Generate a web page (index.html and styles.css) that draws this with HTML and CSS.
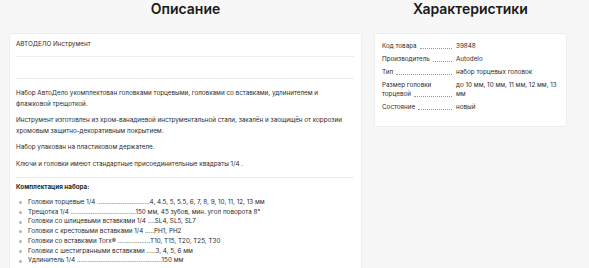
FILE: index.html
```html
<!DOCTYPE html>
<html lang="ru">
<head>
    <meta charset="UTF-8">
    <meta name="viewport" content="width=device-width, initial-scale=1.0">
    <title>Описание и характеристики</title>
    <link rel="stylesheet" href="styles.css">
</head>
<body>
    <div class="product-info">
        <!-- Description column -->
        <section class="column column-desc">
            <h2 class="column-title">Описание</h2>
            <div class="card desc-card">
                <div class="desc-brand">АВТОДЕЛО Инструмент</div>
                <div class="desc-empty"></div>
                <div class="desc-text">
                    <p>Набор АвтоДело укомплектован головками торцевыми, головками со вставками, удлинителем и флажковой трещоткой.</p>
                    <p>Инструмент изготовлен из хром-ванадиевой инструментальной стали, закалён и заощищён от коррозии хромовым защитно-декоративным покрытием.</p>
                    <p>Набор упакован на пластиковом держателе.</p>
                    <p>Ключи и головки имеют стандартные присоединительные квадраты 1/4 .</p>
                </div>
                <div class="kit">
                    <div class="kit-title">Комплектация набора:</div>
                    <ul class="kit-list">
                        <li>Головки торцевые 1/4 .............................4, 4.5, 5, 5.5, 6, 7, 8, 9, 10, 11, 12, 13 мм</li>
                        <li>Трещотка 1/4 ....................................150 мм, 45 зубов, мин. угол поворота 8°</li>
                        <li>Головки со шлицевыми вставками 1/4 ....SL4, SL5, SL7</li>
                        <li>Головки с крестовыми вставками 1/4 .....PH1, PH2</li>
                        <li>Головки со вставками Torx® ..................T10, T15, T20, T25, T30</li>
                        <li>Головки с шестигранными вставками .....3, 4, 5, 6 мм</li>
                        <li>Удлинитель 1/4 ...............................................150 мм</li>
                    </ul>
                </div>
            </div>
        </section>

        <!-- Specs column -->
        <section class="column column-specs">
            <h2 class="column-title">Характеристики</h2>
            <div class="card specs-card">
                <div class="spec-row">
                    <div class="spec-label"><span>Код товара</span><i></i></div>
                    <div class="spec-value">39848</div>
                </div>
                <div class="spec-row">
                    <div class="spec-label"><span>Производитель</span><i></i></div>
                    <div class="spec-value">Autodelo</div>
                </div>
                <div class="spec-row">
                    <div class="spec-label"><span>Тип</span><i></i></div>
                    <div class="spec-value">набор торцевых головок</div>
                </div>
                <div class="spec-row">
                    <div class="spec-label"><span>Размер головки</span><span>торцевой</span><i></i></div>
                    <div class="spec-value">до 10 мм, 10 мм, 11 мм, 12 мм, 13 мм</div>
                </div>
                <div class="spec-row">
                    <div class="spec-label"><span>Состояние</span><i></i></div>
                    <div class="spec-value">новый</div>
                </div>
            </div>
        </section>
    </div>
</body>
</html>
```

FILE: styles.css
```css
body {
    margin: 0;
    background-color: #f7f7f7;
    font-family: Inter, "Noto Sans", Arial, sans-serif;
    color: #2b2b2b;
}

.product-info {
    display: flex;
    align-items: flex-start;
    gap: 12px;
    padding: 0 22px 0 9px;
}

.column-desc {
    width: 353px;
}

.column-specs {
    width: 193px;
}

.column-title {
    margin: 0;
    height: 33px;
    line-height: 18px;
    text-align: center;
    font-size: 14px;
    font-weight: 600;
    color: #1a1a1a;
}

.card {
    background-color: #fff;
    border: 1px solid #eeeeee;
    border-radius: 3px;
}

/* Description card */
.desc-card {
    padding: 0 7px 24px 6px;
    font-size: 6.3px;
}

.desc-brand {
    height: 22px;
    line-height: 21px;
    border-bottom: 1px solid #ececec;
}

.desc-empty {
    height: 21px;
    border-bottom: 1px solid #ececec;
}

.desc-text {
    padding: 9px 0 2px;
    border-bottom: 1px solid #ececec;
    line-height: 10.5px;
}

.desc-text p {
    margin: 0 0 6px;
}

.kit {
    padding-top: 4px;
}

.kit-title {
    font-weight: 700;
    line-height: 10px;
    margin-bottom: 6px;
}

.kit-list {
    margin: 0;
    padding: 0 0 0 3px;
    list-style: none;
    line-height: 9.7px;
}

.kit-list li {
    display: flex;
    align-items: center;
    white-space: nowrap;
}

.kit-list li::before {
    content: "";
    width: 3px;
    height: 3px;
    border-radius: 50%;
    background-color: #b5b5b5;
    margin-right: 6px;
    flex-shrink: 0;
}

/* Specs card */
.specs-card {
    height: 94px;
    padding: 8px 6px 0 7px;
    box-sizing: border-box;
    font-size: 6.3px;
}

.spec-row {
    display: flex;
    line-height: 8.5px;
    margin-bottom: 4.5px;
}

.spec-label {
    width: 70px;
    flex-shrink: 0;
    margin-right: 4px;
    display: flex;
    flex-wrap: wrap;
    align-items: flex-end;
}

.spec-label span {
    margin-right: 3px;
    white-space: nowrap;
}

.spec-label i {
    flex: 1;
    min-width: 10px;
    border-bottom: 1px dotted #9a9a9a;
    margin-bottom: 1.5px;
}

.spec-value {
    flex: 1;
}
```
